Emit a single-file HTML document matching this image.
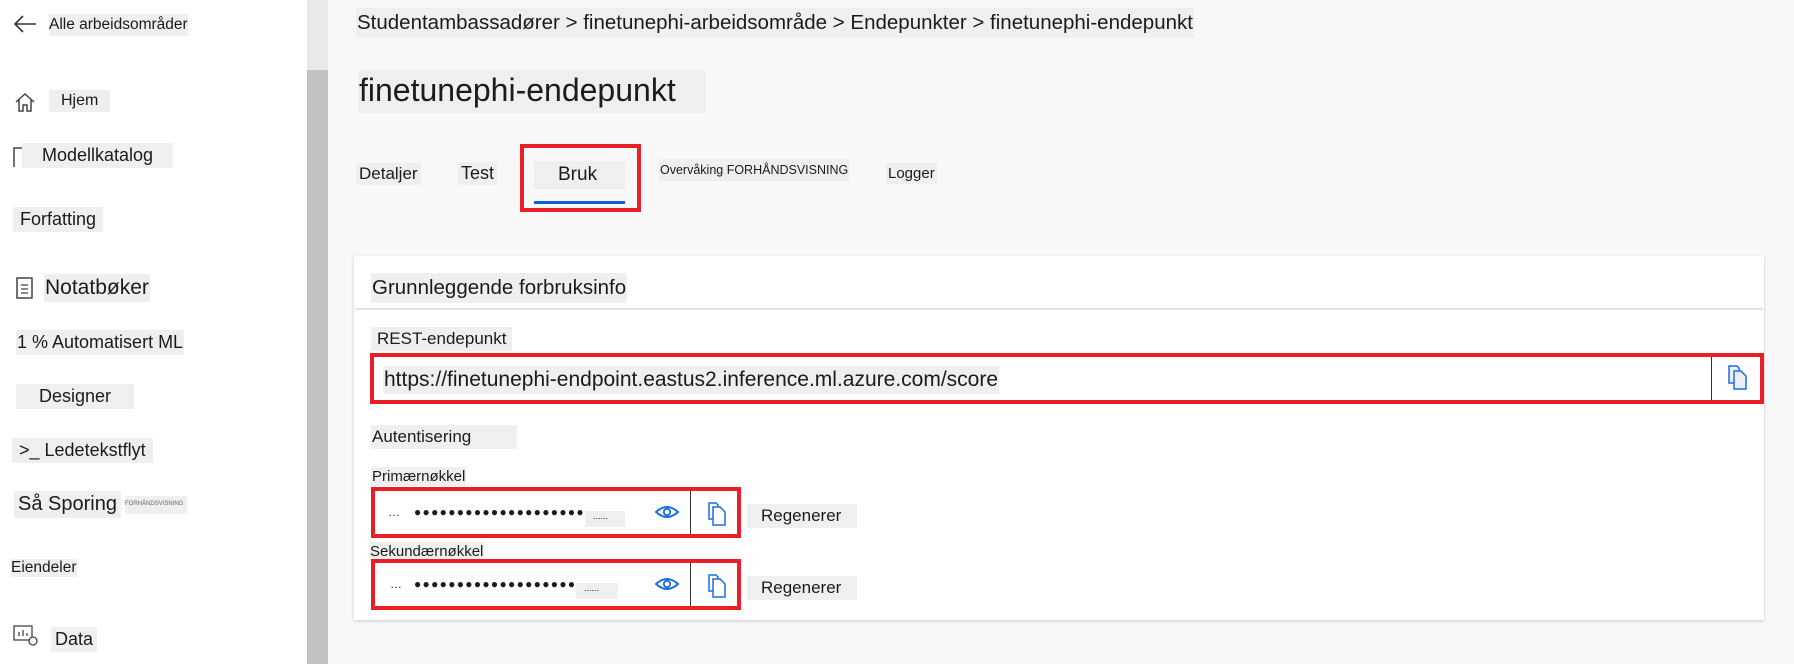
<!DOCTYPE html>
<html><head><meta charset="utf-8"><style>
*{margin:0;padding:0;box-sizing:border-box}
body{width:1794px;height:664px;overflow:hidden;background:#f8f8f8;font-family:"Liberation Sans","DejaVu Sans",sans-serif;color:#1b1b1b;position:relative}
.a{position:absolute;white-space:nowrap}
.t{background:#efefef}
#side{position:absolute;left:0;top:0;width:307px;height:664px;background:#fff}
#sb1{position:absolute;left:307px;top:0;width:21px;height:70px;background:#e9e9e9}
#sb2{position:absolute;left:307px;top:70px;width:21px;height:594px;background:#c2c2c2}
.s{font-size:16px}
.card{position:absolute;left:354px;top:256px;width:1410px;height:364px;background:#fff;box-shadow:0 1px 3px rgba(0,0,0,.2)}
.red{position:absolute;border:4px solid #e81f26;background:#fff}
.dots{font-size:12px;letter-spacing:1.3px}
</style></head><body>
<div id="side"></div><div id="sb1"></div><div id="sb2"></div>
<svg class="a" style="left:12px;top:13px" width="26" height="22"><path d="M24 11H3M11 3L3 11L11 19" stroke="#333" stroke-width="1.6" fill="none"/></svg>
<div class="a t s" style="left:49px;top:14px;padding:2px 0;font-size:15.5px">Alle arbeidsområder</div>
<svg class="a" style="left:13px;top:90px" width="24" height="24"><path d="M3 12L12 4L21 12M6 10V21H10V15H14V21H18V10" stroke="#444" stroke-width="1.5" fill="none"/></svg>
<div class="a t s" style="left:49px;top:90px;padding:2px 12px">Hjem</div>
<svg class="a" style="left:12px;top:145px" width="26" height="26"><path d="M2 22V3H10M14 3H24" stroke="#444" stroke-width="1.5" fill="none"/></svg>
<div class="a t" style="left:22px;top:143px;padding:2px 20px;font-size:18px">Modellkatalog</div>
<div class="a t s" style="left:13px;top:207px;padding:2px 7px;font-size:18px">Forfatting</div>
<svg class="a" style="left:14px;top:275px" width="22" height="26"><rect x="3" y="3" width="15" height="20" stroke="#444" stroke-width="1.5" fill="none"/><path d="M7 10H14M7 14H14M7 18H14" stroke="#444" stroke-width="1.3"/></svg>
<div class="a t" style="left:44px;top:274px;padding:2px 1px;font-size:21px">Notatbøker</div>
<div class="a t" style="left:16px;top:330px;padding:2px 1px;font-size:18px">1 % Automatisert ML</div>
<div class="a t" style="left:16px;top:384px;padding:2px 23px;font-size:18px">Designer</div>
<div class="a t" style="left:12px;top:438px;padding:2px 7px;font-size:18px">&gt;_ Ledetekstflyt</div>
<div class="a t" style="left:14px;top:491px;padding:2px 4px;font-size:20px">Så Sporing</div>
<div class="a t" style="left:125px;top:496px;width:62px;height:18px;font-size:6px;padding-top:5px;color:#666">FORHÅNDSVISNING</div>
<div class="a t" style="left:11px;top:559px;font-size:15.5px">Eiendeler</div>
<svg class="a" style="left:12px;top:622px" width="28" height="26"><rect x="2" y="4" width="18" height="14" stroke="#444" stroke-width="1.3" fill="none"/><path d="M7 14V10M11 14V8M15 14V11" stroke="#444" stroke-width="1.3"/><circle cx="21" cy="19" r="4" stroke="#444" stroke-width="1.3" fill="#fff"/></svg>
<div class="a t" style="left:51px;top:627px;padding:2px 4px;font-size:18px">Data</div>

<div class="a t" style="left:356px;top:8px;padding:3px 1px;font-size:20.5px">Studentambassadører &gt; finetunephi-arbeidsområde &gt; Endepunkter &gt; finetunephi-endepunkt</div>
<div class="a t" style="left:358px;top:70px;padding:2px 30px 4px 1px;font-size:32px">finetunephi-endepunkt</div>
<div class="a t" style="left:356px;top:163px;padding:1px 3px;font-size:17px">Detaljer</div>
<div class="a t" style="left:458px;top:162px;padding:1px 3px;font-size:18px">Test</div>
<div class="red" style="left:520px;top:144px;width:121px;height:68px;background:transparent"></div>
<div class="a t" style="left:534px;top:161px;padding:3px 24px;font-size:19px;width:91px">Bruk</div>
<div class="a" style="left:534px;top:201px;width:91px;height:3px;background:#0f5fd6"></div>
<div class="a t" style="left:659px;top:159px;padding:4px 1px;font-size:12.5px">Overvåking FORHÅNDSVISNING</div>
<div class="a t" style="left:886px;top:163px;padding:2px 2px;font-size:15px">Logger</div>

<div class="card"></div>
<div class="a" style="left:355px;top:308px;width:1408px;height:2px;background:#e3e3e3"></div>
<div class="a t" style="left:371px;top:273px;padding:3px 1px;font-size:20.5px">Grunnleggende forbruksinfo</div>
<div class="a t" style="left:371px;top:327px;padding:2px 6px;font-size:17px">REST-endepunkt</div>
<div class="red" style="left:370px;top:353px;width:1394px;height:51px"></div>
<div class="a t" style="left:383px;top:366px;padding:2px 1px;font-size:21px">https://finetunephi-endpoint.eastus2.inference.ml.azure.com/score</div>
<div class="a" style="left:1711px;top:357px;width:1px;height:43px;background:#333"></div>
<svg class="a" style="left:1727px;top:364px" width="24" height="28"><path d="M2 2H10L12 4V19H2Z" stroke="#1a6fe0" stroke-width="1.5" fill="#eef"/><path d="M7 7H14L19 12V25H7Z" stroke="#1a6fe0" stroke-width="1.5" fill="#eef"/></svg>
<div class="a t" style="left:371px;top:425px;padding:2px 1px;width:146px;font-size:17px">Autentisering</div>
<div class="a t" style="left:371px;top:467px;padding:1px 1px;font-size:15px">Primærnøkkel</div>
<div class="a t" style="left:369px;top:542px;padding:1px 1px;font-size:15px">Sekundærnøkkel</div>

<div class="red" style="left:371px;top:487px;width:370px;height:51px"></div>
<div class="a" style="left:690px;top:491px;width:1px;height:43px;background:#333"></div>
<div class="a dots" style="left:388px;top:505px">…</div>
<div class="a dots" style="left:414px;top:505px">●●●●●●●●●●●●●●●●●●●●</div>
<div class="a t" style="left:585px;top:511px;width:40px;height:16px;font-size:9px;padding-left:8px">......</div>
<svg class="a" style="left:654px;top:503px" width="26" height="18"><path d="M2 9Q13 -1 24 9Q13 19 2 9Z" stroke="#1a6fe0" stroke-width="2" fill="none"/><circle cx="13" cy="9" r="3.2" stroke="#1a6fe0" stroke-width="1.8" fill="none"/></svg>
<svg class="a" style="left:707px;top:501px" width="24" height="26"><path d="M2 2H9L11 4V18H2Z" stroke="#1a6fe0" stroke-width="1.5" fill="#fff"/><path d="M6 6H13L18 11V24H6Z" stroke="#1a6fe0" stroke-width="1.5" fill="#fff"/></svg>
<div class="a t" style="left:747px;top:504px;padding:2px 14px;font-size:17px;width:110px">Regenerer</div>

<div class="red" style="left:371px;top:559px;width:370px;height:51px"></div>
<div class="a" style="left:690px;top:563px;width:1px;height:43px;background:#333"></div>
<div class="a dots" style="left:390px;top:577px">…</div>
<div class="a dots" style="left:414px;top:577px">●●●●●●●●●●●●●●●●●●●</div>
<div class="a t" style="left:576px;top:583px;width:42px;height:16px;font-size:9px;padding-left:8px">......</div>
<svg class="a" style="left:654px;top:575px" width="26" height="18"><path d="M2 9Q13 -1 24 9Q13 19 2 9Z" stroke="#1a6fe0" stroke-width="2" fill="none"/><circle cx="13" cy="9" r="3.2" stroke="#1a6fe0" stroke-width="1.8" fill="none"/></svg>
<svg class="a" style="left:707px;top:573px" width="24" height="26"><path d="M2 2H9L11 4V18H2Z" stroke="#1a6fe0" stroke-width="1.5" fill="#fff"/><path d="M6 6H13L18 11V24H6Z" stroke="#1a6fe0" stroke-width="1.5" fill="#fff"/></svg>
<div class="a t" style="left:747px;top:576px;padding:2px 14px;font-size:17px;width:110px">Regenerer</div>
</body></html>
